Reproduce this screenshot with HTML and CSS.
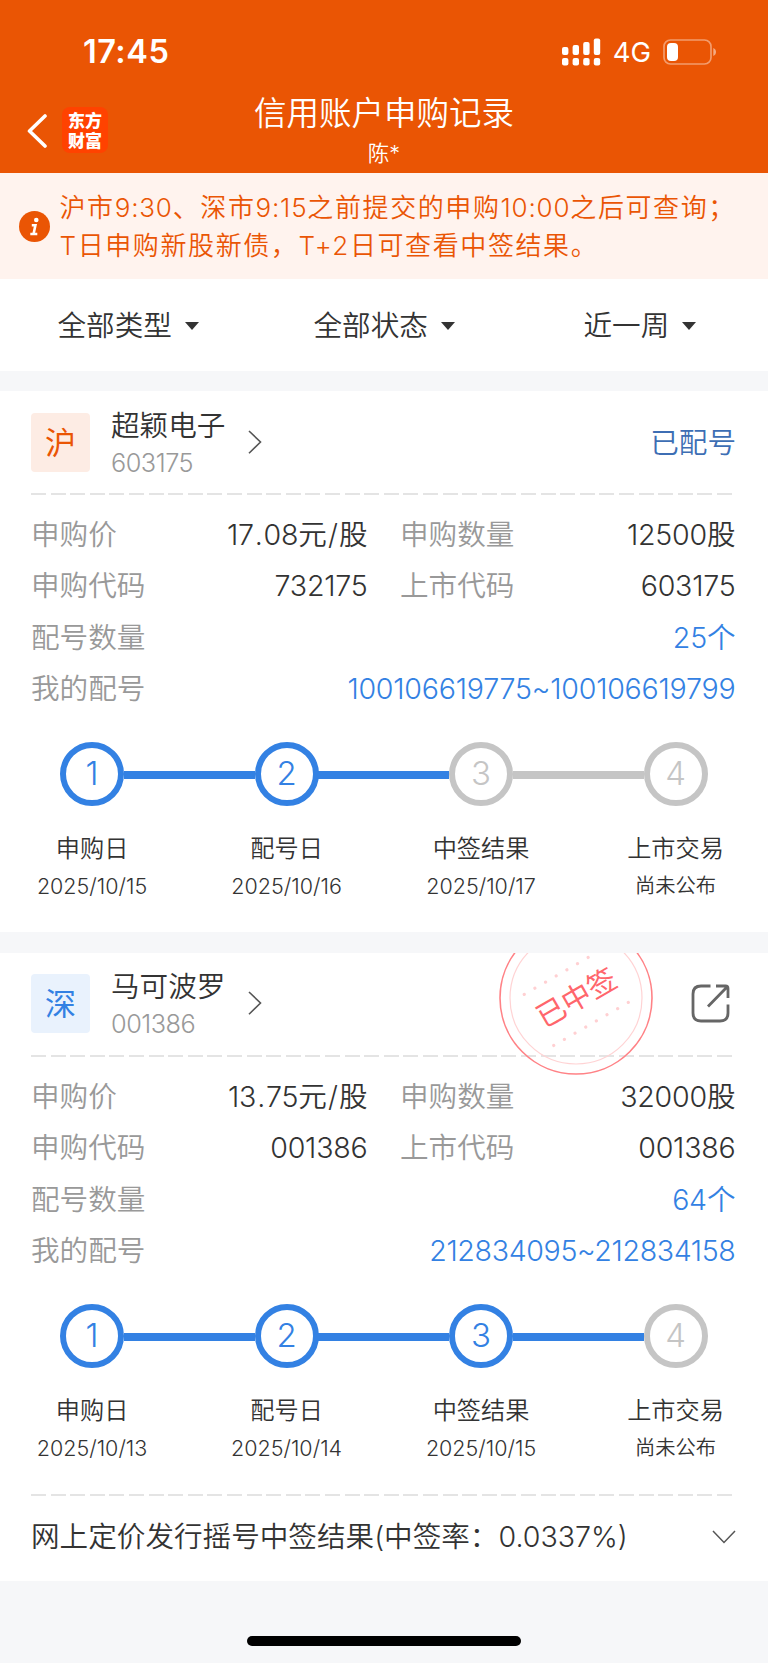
FILE: index.html
```html
<!DOCTYPE html>
<html lang="zh-CN">
<head>
<meta charset="utf-8">
<title>信用账户申购记录</title>
<link rel="stylesheet" href="styles.css">
</head>
<body>
<header class="top">
  <div class="status">
    <span class="time">17:45</span>
    <div class="status-right">
      <svg class="signal" viewBox="0 0 39 28" width="39" height="28" fill="#fff">
        <rect x="0" y="9" width="6.4" height="8" rx="2"/><rect x="10.6" y="7" width="6.4" height="10" rx="2"/><rect x="21.2" y="4" width="6.4" height="13" rx="2"/><rect x="31.8" y="0.5" width="6.4" height="16.5" rx="2"/>
        <rect x="0" y="20" width="6.4" height="7.5" rx="2"/><rect x="10.6" y="20" width="6.4" height="7.5" rx="2"/><rect x="21.2" y="20" width="6.4" height="7.5" rx="2"/><rect x="31.8" y="20" width="6.4" height="7.5" rx="2"/>
      </svg>
      <span class="net">4G</span>
      <svg class="battery" viewBox="0 0 54 26" width="54" height="26">
        <rect x="1" y="1" width="47" height="24" rx="6.5" fill="none" stroke="#fff" stroke-opacity=".42" stroke-width="1.7"/>
        <rect x="4" y="4" width="11" height="18" rx="4" fill="#fff"/>
        <path d="M50.3 9v8c1.7-.7 2.7-2.200 2.700-4s-1-3.300-2.700-4z" fill="#fff" fill-opacity=".5"/>
      </svg>
    </div>
  </div>
  <div class="nav">
    <div class="nav-left">
      <svg class="back" viewBox="0 0 20 34" width="20" height="34" fill="none" stroke="#fff" stroke-width="3.600" stroke-linecap="round" stroke-linejoin="round"><path d="M18 2 2.500 17l15.500 15"/></svg>
      <div class="logo">东方<br>财富</div>
    </div>
    <div class="titles"><h1>信用账户申购记录</h1><p>陈*</p></div>
    <div></div>
  </div>
</header>

<section class="notice">
  <svg viewBox="0 0 31 31" width="31" height="31"><circle cx="15.500" cy="15.500" r="15.500" fill="#ea5504"/><circle cx="17.300" cy="9" r="2.300" fill="#fff"/><path d="M12.800 14.200h3.600l-1.800 8.500M11.300 23h7" fill="none" stroke="#fff" stroke-width="2.600"/></svg>
  <p><span class="l1">沪市<u>9:30</u>、深市<u>9:15</u>之前提交的申购<u>10:00</u>之后可查询；</span><span class="l2">T日申购新股新债，T+2日可查看中签结果。</span></p>
</section>

<nav class="filters">
  <div>全部类型<i></i></div><div>全部状态<i></i></div><div>近一周<i></i></div>
</nav>

<article class="card first">
  <div class="head">
    <div class="badge sh">沪</div>
    <div class="name"><b>超颖电子</b><span>603175</span></div>
    <svg class="chev" viewBox="0 0 14 24" width="14" height="24"><path d="M1 1l11.500 11L1 23.200"/></svg>
    <span class="state">已配号</span>
  </div>
  <div class="dash"></div>
  <dl class="info">
    <div><dt>申购价</dt><dd class="price">17<s>.</s>08<u>元<s>/</s>股</u></dd></div><div><dt>申购数量</dt><dd>12500<u>股</u></dd></div>
    <div><dt>申购代码</dt><dd>732175</dd></div><div><dt>上市代码</dt><dd>603175</dd></div>
    <div class="wide"><dt>配号数量</dt><dd>25<u>个</u></dd></div>
    <div class="wide"><dt>我的配号</dt><dd>100106619775~100106619799</dd></div>
  </dl>
  <ol class="steps">
    <li class="on"><em>1</em><b>申购日</b><span>2025/10/15</span></li>
    <li class="on"><em>2</em><b>配号日</b><span>2025/10/16</span></li>
    <li><em>3</em><b>中签结果</b><span>2025/10/17</span></li>
    <li><em>4</em><b>上市交易</b><span class="cn">尚未公布</span></li>
  </ol>
</article>

<article class="card second">
  <svg class="stamp" viewBox="0 0 156 156" width="156" height="156">
    <circle cx="78" cy="78" r="76" fill="none" stroke="#ff8286" stroke-width="1.600"/>
    <circle cx="78" cy="78" r="66" fill="none" stroke="#ffd3d4" stroke-width="1.200"/>
    <g transform="rotate(-30 78 78)">
      <path d="M35 49H125M35 108H125" stroke="#ffd0d2" stroke-width="3.200" stroke-linecap="round" stroke-dasharray="0 12.300"/>
      <text x="78.500" y="88.500" text-anchor="middle">已中签</text>
    </g>
  </svg>
  <div class="head">
    <div class="badge sz">深</div>
    <div class="name"><b>马可波罗</b><span>001386</span></div>
    <svg class="chev" viewBox="0 0 14 24" width="14" height="24"><path d="M1 1l11.500 11L1 23.200"/></svg>
    <svg class="share" viewBox="0 0 40 40" width="40" height="40"><path d="M19.500 2H10Q2 2 2 10V29Q2 37 10 37H29Q37 37 37 29V20.500M25 2H34.500Q37 2 37 4.500V14M36 3 17 22.500"/></svg>
  </div>
  <div class="dash"></div>
  <dl class="info">
    <div><dt>申购价</dt><dd class="price">13<s>.</s>75<u>元<s>/</s>股</u></dd></div><div><dt>申购数量</dt><dd>32000<u>股</u></dd></div>
    <div><dt>申购代码</dt><dd>001386</dd></div><div><dt>上市代码</dt><dd>001386</dd></div>
    <div class="wide"><dt>配号数量</dt><dd>64<u>个</u></dd></div>
    <div class="wide"><dt>我的配号</dt><dd class="short">212834095~212834158</dd></div>
  </dl>
  <ol class="steps">
    <li class="on"><em>1</em><b>申购日</b><span>2025/10/13</span></li>
    <li class="on"><em>2</em><b>配号日</b><span>2025/10/14</span></li>
    <li class="on"><em>3</em><b>中签结果</b><span>2025/10/15</span></li>
    <li><em>4</em><b>上市交易</b><span class="cn">尚未公布</span></li>
  </ol>
  <div class="dash"></div>
  <div class="result"><span>网上定价发行摇号中签结果(中签率：0.0337%)</span>
    <svg viewBox="0 0 24 14" width="24" height="14"><path d="M1 1l11 11.500L23 1"/></svg></div>
</article>
<footer class="foot"><div class="home"></div></footer>
</body>
</html>
```

FILE: styles.css
```css
* { box-sizing: border-box; margin: 0; padding: 0; }
body {
  width: 768px; height: 1663px; overflow: hidden;
  display: flex; flex-direction: column;
  background: #f6f7f9; color: #333;
  font: 350 28.6px/1 Inter, "Noto Sans CJK SC", sans-serif;
  white-space: nowrap;
}
b, em, h1, u, s { font-weight: inherit; font-style: normal; text-decoration: none; }
svg { display: block; flex: none; }
.top { height: 173px; background: #ea5504; color: #fff; }
.status { height: 80px; padding: 24px 51px 0 83px; display: flex; justify-content: space-between; align-items: center; }
.time { font-size: 32.500px; font-weight: 600; letter-spacing: .5px; }
.status-right { display: flex; align-items: center; }
.net { font-size: 27.500px; font-weight: 400; margin: 2px 12px 0 12px; }
.nav { height: 93px; display: grid; grid-template-columns: 1fr auto 1fr; }
.nav-left { display: flex; padding: 27px 0 0 27px; }
.back { margin-top: 7px; }
.logo { width: 46px; height: 46px; margin-left: 15px; padding-top: 3px; border-radius: 8px; background: #ff4200; text-align: center; font: 900 17px/20px "Noto Sans CJK SC", sans-serif; }
.titles { text-align: center; }
h1 { font-size: 32.500px; line-height: 40px; margin-top: 14px; }
.titles p { font-size: 21.500px; line-height: 26px; margin-top: 6px; }
.notice { height: 106px; background: #fff3ee; color: #ea5504; display: flex; align-items: center; padding-left: 18.500px; font-size: 26px; line-height: 37.500px; }
.notice p { margin-left: 10px; padding-top: 1px; }
.notice span { display: block; letter-spacing: 1.600px; }
.notice u { letter-spacing: .8px; }
.filters { height: 92px; background: #fff; display: grid; grid-template-columns: 256px 270px auto; align-items: center; padding: 2px 0 0 57.500px; }
.filters div { display: flex; align-items: center; }
.filters i { margin-left: 13px; border: 7px solid transparent; border-top: 8px solid #333; border-bottom: 0; }
.card { position: relative; background: #fff; padding: 0 33px 0 31px; overflow: hidden; flex: none; }
.first { height: 541px; margin-top: 20px; }
.second { height: 628px; margin-top: 21px; }
.head { height: 102px; padding-top: 22px; display: flex; align-items: flex-start; }
.second .head { height: 102px; padding-top: 21px; }
.badge { width: 59px; height: 59px; border-radius: 4px; font-size: 31px; line-height: 59px; text-align: center; font-weight: 400; }
.sh { color: #ea5504; background: #fdece4; }
.sz { color: #3381e3; background: #e9f2fd; }
.name { width: 137px; margin-left: 21px; display: flex; flex-direction: column; }
.name b { line-height: 30px; margin-top: -2px; }
.name span { font-size: 25.300px; line-height: 26px; margin-top: 9px; color: #999; letter-spacing: -.5px; }
.chev { margin-top: 17px; fill: none; stroke: #555; stroke-width: 1.600; }
.state { margin-left: auto; margin-right: -1px; line-height: 60px; color: #3d6eb4; }
.share { margin: 10px 4.500px 0 auto; fill: none; stroke: #666; stroke-width: 2.800; stroke-linecap: butt; }
.dash { height: 2px; width: 702px; background: repeating-linear-gradient(90deg, #e4e4e4 0 15px, transparent 15px 19.600px); }
.info { margin-top: 14px; display: grid; grid-template-columns: 336px 335px; column-gap: 33px; grid-auto-rows: 51.600px; }
.info div { display: flex; justify-content: space-between; align-items: center; }
.info .wide { grid-column: 1 / 3; color: #3381e3; }
dt { color: #999; }
dd { letter-spacing: -.22px; margin-right: -.5px; }
.short { letter-spacing: -.36px; }
u { letter-spacing: 0; }
.price s { margin: 0 1px; }
.steps { list-style: none; display: grid; grid-template-columns: repeat(4, 194.500px); margin: 27px -36.200px 0; height: 187px; }
.second .steps { height: 190px; }
.steps li { position: relative; display: flex; flex-direction: column; align-items: center; }
.steps li + li::before { content: ""; position: absolute; top: 28.500px; right: 129px; width: 131px; height: 8.500px; background: #c5c5c5; }
.steps .on::before, .steps .on + li::before { background: #3381e3 !important; }
.steps em { width: 64px; height: 64px; border: 6.500px solid #c5c5c5; border-radius: 50%; color: #c5c5c5; font-size: 33px; line-height: 51px; text-align: center; }
.on em { border-color: #3381e3; color: #3381e3; }
.steps b { font-size: 24.200px; line-height: 30px; margin-top: 28px; }
.steps span { font-size: 21.500px; line-height: 24px; margin-top: 10px; }
.steps .cn { font-size: 20.300px; }
.stamp { position: absolute; left: 498px; top: -33px; }
.stamp text { font: 400 29px "Noto Sans CJK SC", sans-serif; fill: #ff666c; }
.result { display: flex; justify-content: space-between; align-items: center; height: 81px; margin-right: -1px; }
.result svg { fill: none; stroke: #555; stroke-width: 1.500; }
.foot { flex: 1; display: flex; justify-content: center; align-items: flex-end; padding-bottom: 17px; }
.home { width: 274px; height: 10px; border-radius: 5px; background: #000; }
```
